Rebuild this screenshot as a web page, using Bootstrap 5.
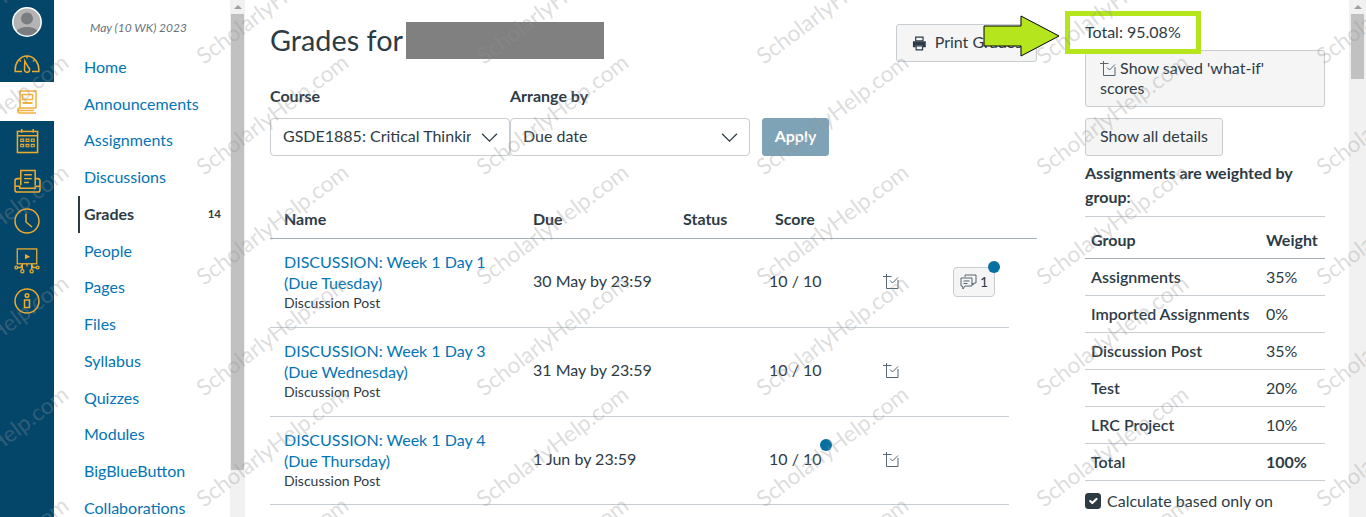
<!DOCTYPE html>
<html lang="en">
<head>
<meta charset="UTF-8">
<title>Grades</title>
<link href="https://cdn.jsdelivr.net/npm/bootstrap@5.3.3/dist/css/bootstrap.min.css" rel="stylesheet">
<style>
html,body{height:517px;overflow:hidden;}
body{font-family:Lato,"Liberation Sans",sans-serif;font-size:16px;color:#2d3b45;background:#fff;}
a{color:#0374b5;text-decoration:none;}
.shell{height:517px;position:relative;overflow:hidden;}
.rail{width:54px;background:#04466a;padding-top:6px;}
.rail-item{height:40px;}
.rail-item.rail-first{height:39px;}
.rail-item.rail-top{height:37px;}
.rail-item.rail-active{background:#fff;height:39px;}
.rail svg{display:block;}
.coursenav{width:176px;padding-top:19px;}
.term{font-size:12px;font-style:italic;color:#66717a;padding-left:36px;line-height:18px;height:29.8px;}
.navlist{list-style:none;margin:0;padding:0 0 0 24px;}
.navlist li{height:36.75px;line-height:36.75px;padding-left:6px;display:flex;justify-content:space-between;}
.navlist li.here{border-left:2px solid #2d3b45;padding-left:4px;font-weight:700;}
.navcount{font-size:11.5px;font-weight:700;padding-right:9px;}
.fakebar{background:#f1f1f1;position:relative;flex:none;}
.fakebar.narrow{width:15px;}
.fakebar.wide{width:17px;margin-left:24px;}
.thumb{position:absolute;background:#c1c1c1;left:1px;right:1px;top:14px;}
.narrow .thumb{height:456px;}
.wide .thumb{height:65px;left:2px;right:2px;}
.uparrow{position:absolute;top:5px;left:50%;margin-left:-4px;border:4px solid transparent;border-top:0;border-bottom:4px solid #a0a0a0;}
.gradecol{width:767px;margin-left:25px;padding-top:22px;flex:none;}
.titlerow{height:40px;}
.titletext{font-size:28.8px;font-weight:400;line-height:37px;margin:0;}
.redacted{display:inline-block;width:198px;height:37px;background:#808080;margin-left:3px;}
.btn-canvas{background:#f5f5f5;border:1px solid #c7cdd1;color:#2d3b45;border-radius:3px;font-size:16px;line-height:24px;padding:6px 14px;}
.print-btn{height:38px;width:141px;margin-top:2px;white-space:nowrap;overflow:hidden;text-align:left;padding-left:15px;}
.print-btn span{margin-top:-2px;}
.filterrow{margin-top:22px;}
.filterbox{width:240px;}
.filterbox label{font-weight:700;line-height:24px;height:24px;margin-bottom:10px;display:block;}
.form-select.pick{height:38px;font-size:16px;color:#2d3b45;border-color:#c7cdd1;border-radius:4px;padding:0 38px 2px 12px;line-height:34px;background-size:17px 17px;background-position:right 11px center;background-image:url("data:image/svg+xml,%3csvg xmlns='http://www.w3.org/2000/svg' viewBox='0 0 16 16'%3e%3cpath fill='none' stroke='%232d3b45' stroke-width='1.200' d='M1 4.500l7 7 7-7'/%3e%3c/svg%3e");}
.apply-btn{background:#7fa3b6;border:1px solid #7fa3b6;color:#fff;border-radius:3px;width:67px;height:38px;font-size:16px;font-weight:700;padding:0 0 2px;margin-left:12px;}
.gradetable{width:767px;margin-top:44px;border-collapse:collapse;table-layout:fixed;}
.gradetable th{font-weight:700;height:38px;padding:7px 0 0 14px;vertical-align:top;line-height:24px;border-bottom:1px solid #a5afb5;}
.gradetable td{padding:12px 0 0 14px;height:89px;vertical-align:top;border-bottom:1px solid #c7cdd1;line-height:21px;}
.gradetable tbody tr:last-child td{height:88px;}
.gradetable td.endcell{border-bottom:0;padding:0;}
.assignname{display:block;width:220px;}
.assigntype{font-size:14px;line-height:20px;display:block;}
.gradetable td.midcell{padding-top:31px;position:relative;}
.gradetable td.scorecell{padding-left:8px;}
.gradetable td.iconcell{padding-left:27px;padding-top:31px;}
.gradetable td.chatcell{padding-left:28px;}
.unread{position:absolute;width:12px;height:12px;border-radius:50%;background:#0770a3;}
.commentbtn{position:relative;display:inline-flex;align-items:center;gap:3px;width:42px;height:30px;background:#f5f5f5;border:1px solid #c7cdd1;border-radius:4px;padding:0 0 0 6px;font-size:14px;margin-top:16px;}
.sidecol{width:240px;margin-left:48px;flex:none;}
.totalline{height:50px;padding-top:20px;line-height:24px;}
.wide-btn{display:block;width:240px;height:57px;text-align:left;line-height:20px;padding:6px 14px 8px;border-radius:3px;}
.details-btn{display:block;width:138px;height:38px;margin-top:11px;text-align:left;padding:5px 14px 7px;}
.weightnote{font-weight:700;line-height:24px;margin:5px 0 7px;}
.weighttable{width:240px;border-collapse:collapse;border-top:1px solid #c7cdd1;table-layout:fixed;}
.weighttable td,.weighttable th{padding:0 0 0 6px;height:37px;border-bottom:1px solid #c7cdd1;font-size:16px;white-space:nowrap;}
.weighttable thead th{height:42px;font-weight:700;border-bottom-color:#a5afb5;padding-top:4px;}
.weighttable th{font-weight:600;}
.groupcol{width:175px;}
.calc-row{margin-top:8px;}
.calc-row .form-check-input{width:16px;height:16px;margin:4px 6px 0 0;background-color:#2d3b45;border-color:#2d3b45;border-radius:3px;flex:none;}
.calc-row label{line-height:24px;}
.wm{position:absolute;font-size:22.5px;color:rgba(147,147,147,.32);transform-origin:0 100%;transform:rotate(-37deg);white-space:nowrap;pointer-events:none;line-height:26px;}
.callout{position:absolute;left:1065px;top:11px;width:136px;height:43px;border:5px solid #b5e61d;background:#fff;line-height:24px;padding:4px 0 0 15px;}
.callarrow{position:absolute;left:983px;top:15px;}
</style>
</head>
<body>
<div class="shell d-flex" id="shell">
  <div class="rail flex-none">
    <div class="rail-item rail-first d-flex justify-content-center">
      <svg width="32" height="32" viewBox="0 0 32 32"><defs><clipPath id="ac"><circle cx="16" cy="16" r="13.5"/></clipPath></defs><circle cx="16" cy="16" r="14.200" fill="#b4b4b4" stroke="#fff" stroke-width="1.500"/><g clip-path="url(#ac)" fill="#7a7e80"><circle cx="16" cy="12.500" r="6"/><path d="M4 30c0-7 6-9 12-9s12 2 12 9z"/></g></svg>
    </div>
    <div class="rail-item rail-top d-flex justify-content-center align-items-center">
      <svg width="26" height="18" viewBox="0 0 26 18" fill="none" stroke="#eaab2e" stroke-width="1.500"><path d="M8 16.500H1.200C.5 8 6 1 13 1s12.500 7 11.800 15.500H18"/><path d="M10.800 6l3.700 6.500a2.600 2.600 0 1 1-4 2.200z"/><path d="M13 1v2.500M5.500 5l1.500 1.500M20.500 5L19 6.500" stroke-width="1.300"/></svg>
    </div>
    <div class="rail-item rail-active d-flex justify-content-center align-items-center">
      <svg width="20" height="24" viewBox="0 0 20 24" fill="none" stroke="#f3b13e" stroke-width="1.500"><path d="M3 18V1h16v17"/><path d="M3 18c-3 0-3 5 0 5h16M1 20.500h16"/><rect x="5.500" y="4.500" width="10" height="5"/><path d="M5.500 13h10" stroke-width="2"/><path d="M3 18h16"/></svg>
    </div>
    <div class="rail-item d-flex justify-content-center align-items-center">
      <svg width="23" height="26" viewBox="0 0 24 26" fill="none" stroke="#eaab2e" stroke-width="1.600"><rect x="1.500" y="3" width="21" height="22"/><path d="M1.500 7.500h21M6 .5v4M18 .5v4"/><path d="M5 11h3v2.500H5zM10.500 11h3v2.500h-3zM16 11h3v2.500h-3zM5 16.500h3V19H5zM10.500 16.500h3V19h-3zM16 16.500h3V19h-3z" stroke-width="1.200"/></svg>
    </div>
    <div class="rail-item d-flex justify-content-center align-items-center">
      <svg width="27" height="25" viewBox="0 0 28 26" fill="none" stroke="#eaab2e" stroke-width="1.600"><path d="M7 17V1.500h15V17"/><path d="M10.500 6h8M10.500 10h8M10.500 14h5" stroke-width="1.400"/><path d="M7 10H3.500c-1.500 0-2.500 1-2.500 2.500v9c0 1.500 1 2.500 2.500 2.500h21c1.500 0 2.500-1 2.500-2.500v-9c0-1.500-1-2.500-2.500-2.500H22"/><path d="M1 18h5v2h16v-2h5"/></svg>
    </div>
    <div class="rail-item d-flex justify-content-center align-items-center">
      <svg width="26" height="26" viewBox="0 0 26 26" fill="none" stroke="#eaab2e" stroke-width="1.500"><circle cx="13" cy="13" r="12"/><path d="M12 5.500V14l6 5"/></svg>
    </div>
    <div class="rail-item d-flex justify-content-center align-items-center">
      <svg width="26" height="26" viewBox="0 0 28 28" fill="none" stroke="#eaab2e" stroke-width="1.400"><rect x="3.500" y="1" width="21" height="16"/><path d="M12.500 7.500l3.500 1.800-3.500 1.800z" fill="#eaab2e"/><path d="M9 17v6M19 17v6M14 17v3M4 21h4v-3M24 21h-4v-3"/><circle cx="2.500" cy="21" r="1.500"/><circle cx="9" cy="25" r="1.700"/><circle cx="19" cy="25" r="1.700"/><circle cx="25.500" cy="21" r="1.500"/></svg>
    </div>
    <div class="rail-item d-flex justify-content-center align-items-center">
      <svg width="26" height="26" viewBox="0 0 26 26" fill="none" stroke="#eaab2e" stroke-width="1.500"><circle cx="13" cy="13" r="12"/><circle cx="13" cy="7.500" r="1.800"/><path d="M10.500 12h5v7.500h-5z"/></svg>
    </div>
  </div>
  <div class="coursenav flex-none">
    <div class="term">May (10 WK) 2023</div>
    <ul class="navlist">
      <li><a href="#">Home</a></li>
      <li><a href="#">Announcements</a></li>
      <li><a href="#">Assignments</a></li>
      <li><a href="#">Discussions</a></li>
      <li class="here"><span>Grades</span><span class="navcount">14</span></li>
      <li><a href="#">People</a></li>
      <li><a href="#">Pages</a></li>
      <li><a href="#">Files</a></li>
      <li><a href="#">Syllabus</a></li>
      <li><a href="#">Quizzes</a></li>
      <li><a href="#">Modules</a></li>
      <li><a href="#">BigBlueButton</a></li>
      <li><a href="#">Collaborations</a></li>
    </ul>
  </div>
  <div class="fakebar narrow"><span class="uparrow"></span><div class="thumb"></div></div>

  <div class="gradecol">
    <div class="titlerow d-flex justify-content-between">
      <h1 class="titletext d-flex">Grades for<span class="redacted"></span></h1>
      <button class="btn-canvas print-btn d-flex align-items-center gap-2" type="button">
        <svg width="15" height="15" viewBox="0 0 16 16" class="flex-none"><path d="M4 1h8v4H4z" fill="none" stroke="#2d3b45" stroke-width="1.300"/><path d="M1 5.500h14V12h-3v-2H4v2H1z" fill="#2d3b45"/><path d="M4.500 10.500h7V15h-7z" fill="none" stroke="#2d3b45" stroke-width="1.300"/></svg>
        <span>Print Grades</span>
      </button>
    </div>
    <form class="filterrow d-flex align-items-end">
      <div class="filterbox">
        <label for="coursepick">Course</label>
        <select class="form-select pick" id="coursepick"><option>GSDE1885: Critical Thinking May (10 WK) 2023</option></select>
      </div>
      <div class="filterbox">
        <label for="arrangepick">Arrange by</label>
        <select class="form-select pick" id="arrangepick"><option>Due date</option></select>
      </div>
      <button class="apply-btn" type="button">Apply</button>
    </form>
    <table class="gradetable">
      <colgroup><col style="width:249px"><col style="width:150px"><col style="width:92px"><col style="width:95px"><col style="width:69px"><col style="width:84px"><col style="width:28px"></colgroup>
      <thead><tr><th>Name</th><th>Due</th><th>Status</th><th>Score</th><th></th><th></th><th class="endcell"></th></tr></thead>
      <tbody>
        <tr>
          <td><a class="assignname" href="#">DISCUSSION: Week 1 Day 1 (Due Tuesday)</a><span class="assigntype">Discussion Post</span></td>
          <td class="midcell">30 May by 23:59</td><td></td>
          <td class="midcell scorecell">10 / 10</td>
          <td class="midcell iconcell"><svg width="16" height="16" viewBox="0 0 16 16" fill="none" stroke="#556572"><path d="M0 2.500h8.500M3.500 0v14.500h11.500V6M7 6.500l2.500 2.500L15 3.500"/></svg></td>
          <td class="chatcell"><span class="commentbtn"><svg width="17" height="16" viewBox="0 0 17 16" fill="none" stroke="#556572"><path d="M5 3V1h11v8h-2l-1 2-1-2"/><path d="M1 4h11v8H5l-2 3-.5-3H1z"/><path d="M3.500 7h6M3.500 9.500h4"/></svg>1<span class="unread" style="top:-7px;right:-6px"></span></span></td>
          <td class="endcell"></td>
        </tr>
        <tr>
          <td><a class="assignname" href="#">DISCUSSION: Week 1 Day 3 (Due Wednesday)</a><span class="assigntype">Discussion Post</span></td>
          <td class="midcell">31 May by 23:59</td><td></td>
          <td class="midcell scorecell">10 / 10</td>
          <td class="midcell iconcell"><svg width="16" height="16" viewBox="0 0 16 16" fill="none" stroke="#556572"><path d="M0 2.500h8.500M3.500 0v14.500h11.500V6M7 6.500l2.500 2.500L15 3.500"/></svg></td>
          <td></td><td class="endcell"></td>
        </tr>
        <tr>
          <td><a class="assignname" href="#">DISCUSSION: Week 1 Day 4 (Due Thursday)</a><span class="assigntype">Discussion Post</span></td>
          <td class="midcell">1 Jun by 23:59</td><td></td>
          <td class="midcell scorecell">10 / 10<span class="unread" style="top:22px;left:59px"></span></td>
          <td class="midcell iconcell"><svg width="16" height="16" viewBox="0 0 16 16" fill="none" stroke="#556572"><path d="M0 2.500h8.500M3.500 0v14.500h11.500V6M7 6.500l2.500 2.500L15 3.500"/></svg></td>
          <td></td><td class="endcell"></td>
        </tr>
      </tbody>
    </table>
  </div>

  <div class="sidecol">
    <div class="totalline">Total: 95.08%</div>
    <button class="btn-canvas wide-btn" type="button"><svg width="16" height="16" viewBox="0 0 16 16" fill="none" stroke="#556572"><path d="M0 2.500h8.500M3.500 0v14.500h11.500V6M7 6.500l2.500 2.500L15 3.500"/></svg> Show saved 'what-if' scores</button>
    <button class="btn-canvas details-btn" type="button">Show all details</button>
    <p class="weightnote">Assignments are weighted by group:</p>
    <table class="weighttable">
      <colgroup><col class="groupcol"><col></colgroup>
      <thead><tr><th>Group</th><th>Weight</th></tr></thead>
      <tbody>
        <tr><th>Assignments</th><td>35%</td></tr>
        <tr><th>Imported Assignments</th><td>0%</td></tr>
        <tr><th>Discussion Post</th><td>35%</td></tr>
        <tr><th>Test</th><td>20%</td></tr>
        <tr><th>LRC Project</th><td>10%</td></tr>
        <tr><th>Total</th><td class="fw-bold">100%</td></tr>
      </tbody>
    </table>
    <div class="calc-row d-flex">
      <input class="form-check-input" type="checkbox" id="calc" checked>
      <label for="calc">Calculate based only on graded assignments</label>
    </div>
  </div>
  <div class="fakebar wide"><span class="uparrow"></span><div class="thumb"></div></div>

  <div class="callout">Total: 95.08%</div>
  <svg class="callarrow" width="78" height="42" viewBox="0 0 78 42"><path d="M1 11H38V1L76 21 38 41V31H1z" fill="#b5e61d" stroke="#000" stroke-width="1"/></svg>
</div>
<script>
// watermark grid, repeats every 280 x 110.7
const shell = document.getElementById('shell');
for (let col = -1; col < 5; col++) {
    for (let row = 0; row < 6; row++) {
        const s = document.createElement('span');
        s.className = 'wm';
        s.textContent = 'ScholarlyHelp.com';
        s.style.left = (207 + col * 280) + 'px';
        s.style.top = (43 + row * 110.7) + 'px';
        shell.appendChild(s);
    }
}
</script>
<script src="https://cdn.jsdelivr.net/npm/bootstrap@5.3.3/dist/js/bootstrap.bundle.min.js"></script>
</body>
</html>
